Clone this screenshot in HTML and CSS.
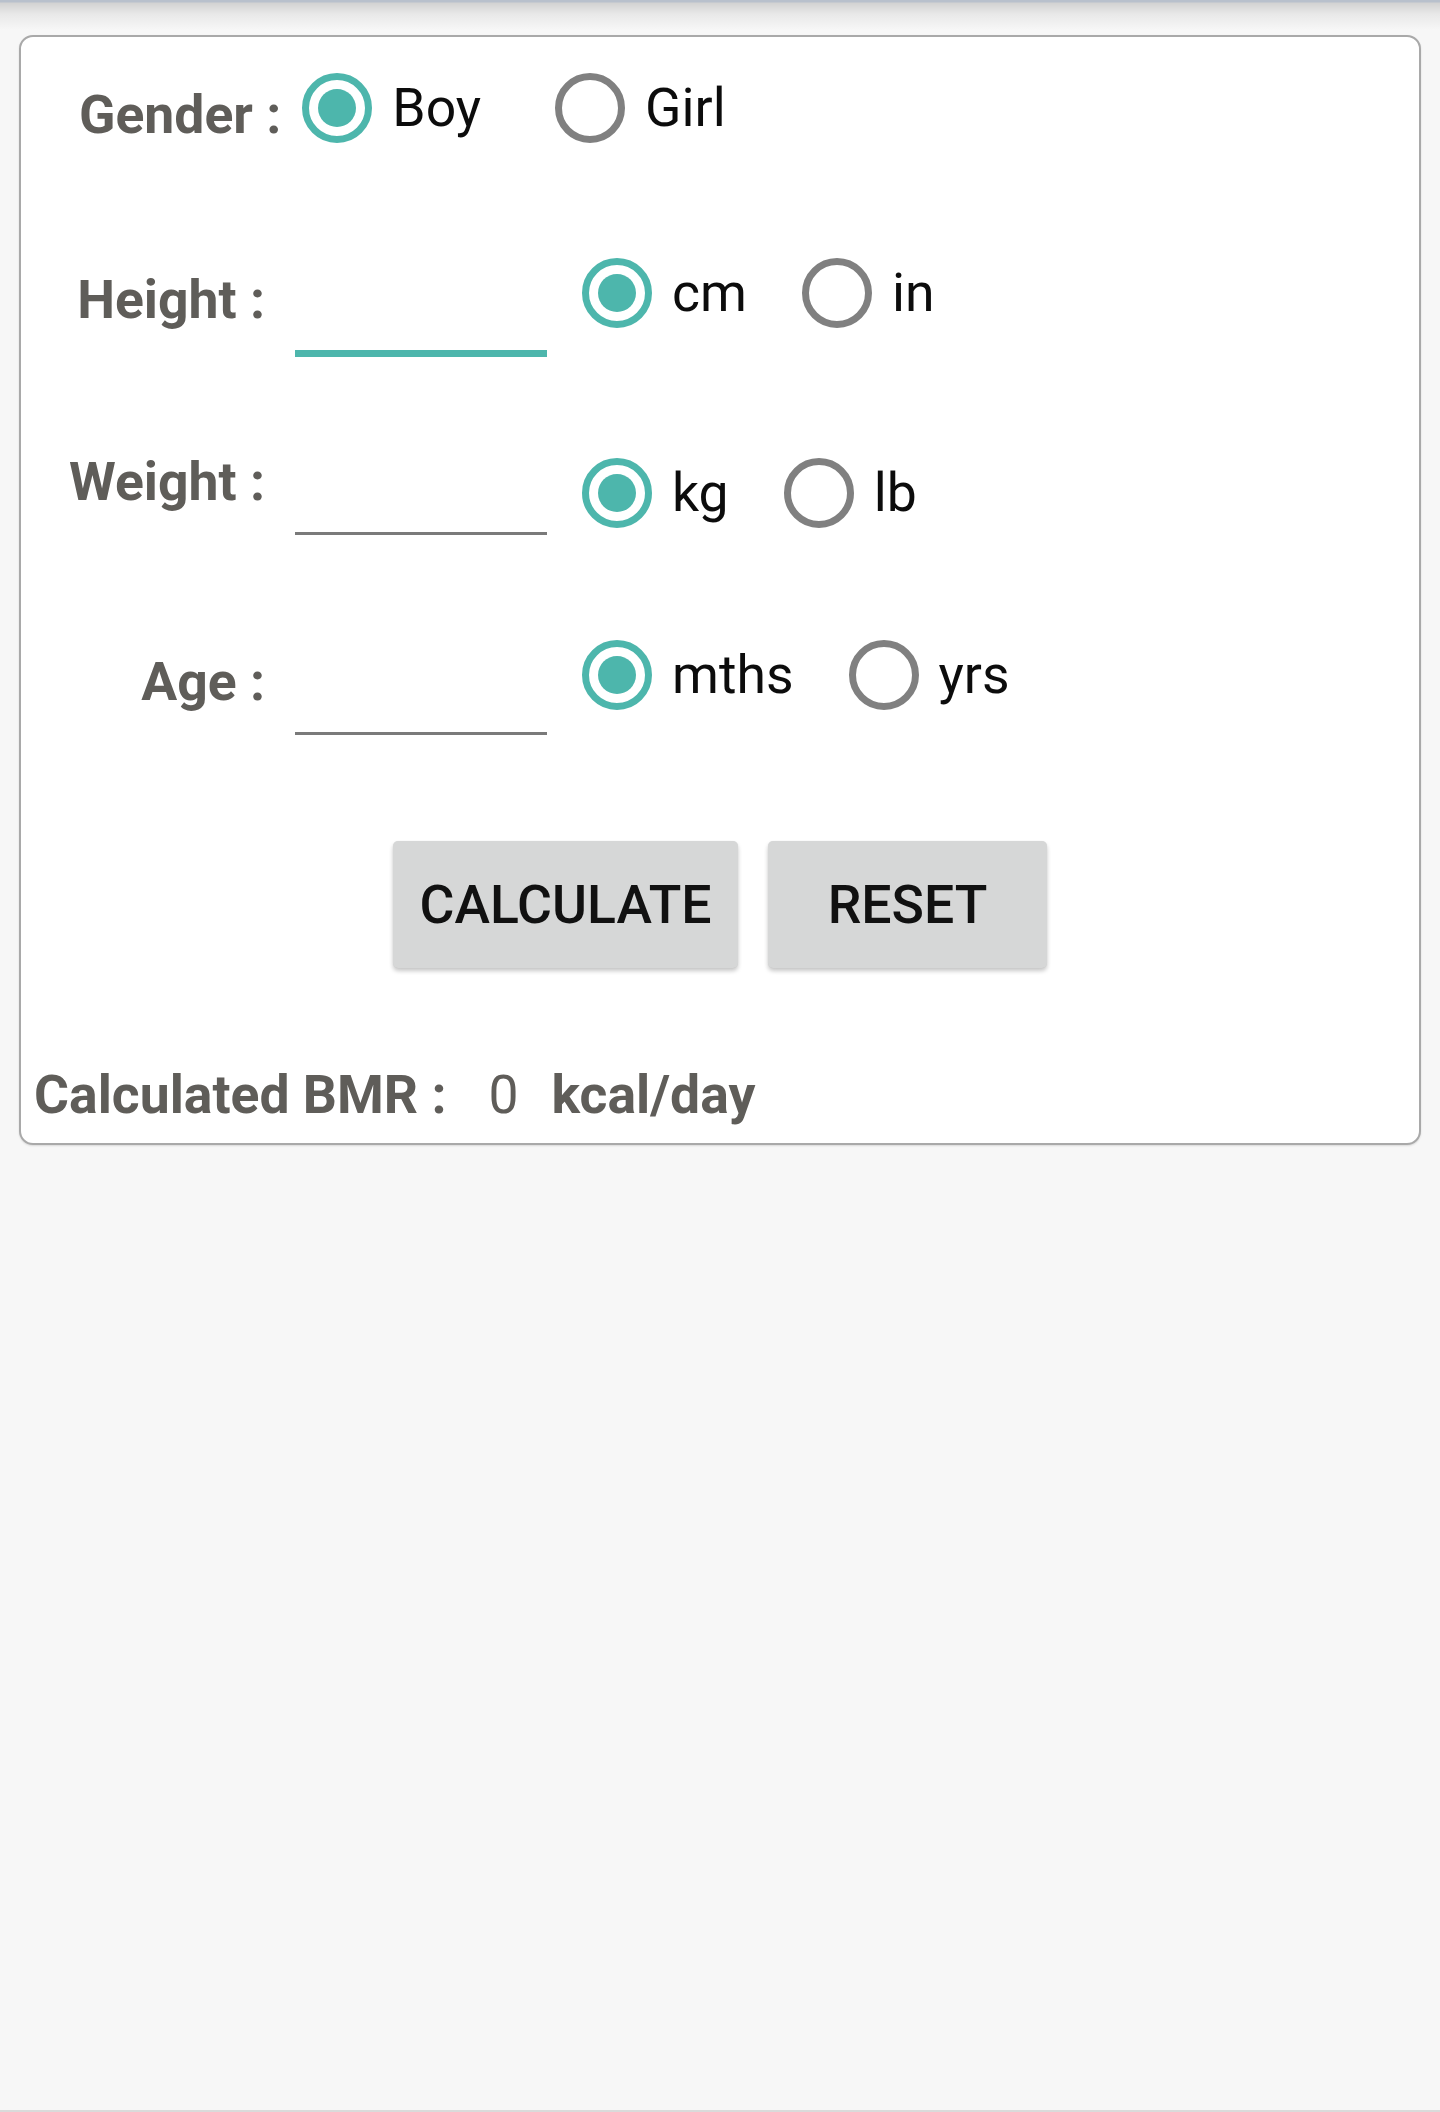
FILE: index.html
```html
<!DOCTYPE html>
<html lang="en">
<head>
<meta charset="utf-8">
<title>BMR Calculator</title>
<link rel="stylesheet" href="styles.css">
</head>
<body>
<div class="page">
  <div class="appbar-shadow"></div>
  <div class="card">
    <div class="row row-gender">
      <span class="label label-gender">Gender :</span>
      <label class="radio-item gap-wide"><span class="radio checked"></span><span class="radio-text">Boy</span></label>
      <label class="radio-item"><span class="radio"></span><span class="radio-text">Girl</span></label>
    </div>

    <div class="row row-height">
      <span class="label label-col label-height">Height :</span>
      <input class="field field-focused" type="text" aria-label="Height">
      <div class="radio-group">
        <label class="radio-item gap"><span class="radio checked"></span><span class="radio-text">cm</span></label>
        <label class="radio-item"><span class="radio"></span><span class="radio-text">in</span></label>
      </div>
    </div>

    <div class="row row-weight">
      <span class="label label-col label-weight">Weight :</span>
      <input class="field field-short" type="text" aria-label="Weight">
      <div class="radio-group">
        <label class="radio-item gap"><span class="radio checked"></span><span class="radio-text">kg</span></label>
        <label class="radio-item"><span class="radio"></span><span class="radio-text">lb</span></label>
      </div>
    </div>

    <div class="row row-age">
      <span class="label label-col label-age">Age :</span>
      <input class="field field-age" type="text" aria-label="Age">
      <div class="radio-group">
        <label class="radio-item gap"><span class="radio checked"></span><span class="radio-text">mths</span></label>
        <label class="radio-item"><span class="radio"></span><span class="radio-text">yrs</span></label>
      </div>
    </div>

    <div class="buttons">
      <button class="btn btn-calc" type="button">CALCULATE</button>
      <button class="btn btn-reset" type="button">RESET</button>
    </div>

    <div class="result">
      <span class="label">Calculated BMR :</span>
      <span class="result-value">0</span>
      <span class="label">kcal/day</span>
    </div>
  </div>
</div>
</body>
</html>
```

FILE: styles.css
```css
* {
  box-sizing: border-box;
}

html, body {
  margin: 0;
  padding: 0;
}

body {
  background: #f7f7f7;
  font-family: Roboto, "Liberation Sans", Arial, sans-serif;
}

.page {
  height: 2112px;
  border-bottom: 2px solid #dadada;
}

.appbar-shadow {
  height: 30px;
  background: linear-gradient(to bottom, #b8c0cc 0, #b8c0cc 2px, #d2d2d2 3px, #e8e8e8 14px, #f7f7f7 30px);
}

.card {
  margin: 5px 19px 0;
  background: #ffffff;
  border: 2px solid #a9a9a9;
  border-radius: 14px;
  box-shadow: 0 1px 2px rgba(0, 0, 0, 0.12);
  padding: 0 0 17px;
}

.row {
  display: flex;
  align-items: center;
  height: 140px;
}

.row-gender {
  height: 142px;
  padding-left: 58px;
}

.row-height {
  margin-top: 44px;
}

.row-weight {
  margin-top: 60px;
}

.row-age {
  margin-top: 42px;
}

.label {
  font-size: 53.5px;
  line-height: 62px;
  font-weight: 700;
  color: #5f5d59;
  white-space: nowrap;
}

.label-gender {
  margin-top: 14px;
  margin-right: 21px;
}

.label-col {
  width: 244px;
  text-align: right;
  margin-right: 30px;
}

.label-height {
  margin-top: 14px;
}

.label-weight {
  margin-bottom: 22px;
}

.label-age {
  margin-top: 14px;
}

.field {
  width: 252px;
  border: none;
  outline: none;
  background: transparent;
  padding: 0;
  font-family: inherit;
  font-size: 52px;
  margin-right: 35px;
}

.field-focused {
  height: 127px;
  border-bottom: 7px solid #4db6ac;
}

.field-short {
  height: 84px;
  border-bottom: 3px solid #7a7a7a;
}

.field-age {
  height: 120px;
  border-bottom: 3px solid #7a7a7a;
}

.radio-group {
  display: flex;
  align-items: center;
}

.radio-item {
  display: inline-flex;
  align-items: center;
}

.radio-item.gap {
  margin-right: 55px;
}

.radio-item.gap-wide {
  margin-right: 74px;
}

.radio {
  width: 70px;
  height: 70px;
  border-radius: 50%;
  border: 7px solid #808080;
  display: flex;
  align-items: center;
  justify-content: center;
  flex: none;
}

.radio.checked {
  border-color: #4db6ac;
}

.radio.checked::after {
  content: "";
  width: 38px;
  height: 38px;
  border-radius: 50%;
  background: #4db6ac;
}

.radio-text {
  margin-left: 20px;
  font-size: 53.5px;
  line-height: 62px;
  color: #0c0c0c;
}

.buttons {
  display: flex;
  justify-content: center;
  gap: 30px;
  margin-top: 96px;
}

.btn {
  height: 127px;
  border: none;
  border-radius: 5px;
  background: #d6d7d7;
  box-shadow: 0 3px 4px rgba(0, 0, 0, 0.22), 0 0 1px rgba(0, 0, 0, 0.08);
  font-family: inherit;
  font-size: 53.5px;
  font-weight: 500;
  color: #111111;
  padding: 0;
}

.btn-calc {
  width: 345px;
}

.btn-reset {
  width: 279px;
}

.result {
  display: flex;
  align-items: baseline;
  margin-top: 96px;
  padding-left: 13px;
}

.result-value {
  font-size: 53.5px;
  line-height: 62px;
  color: #5f5d59;
  margin-left: 42px;
  margin-right: 33px;
}
```
